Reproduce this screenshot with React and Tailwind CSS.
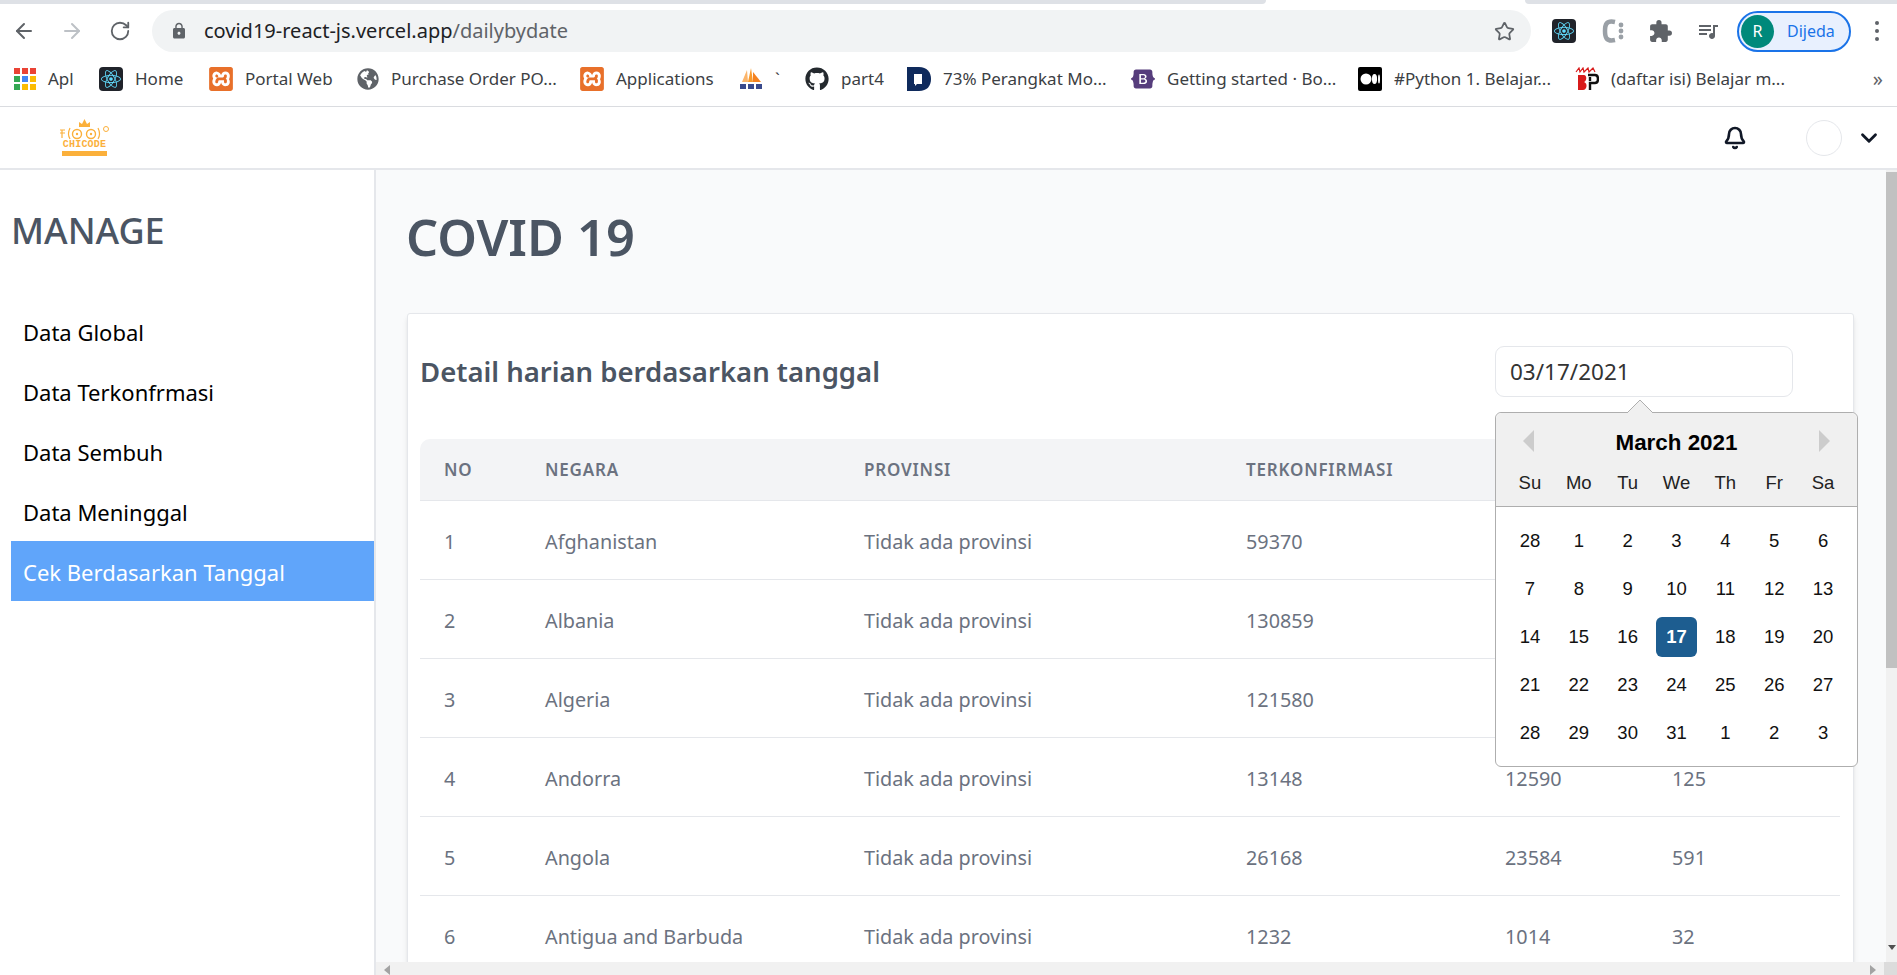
import { ArrowLeft, ArrowRight, Bell, ChevronDown, RotateCw, Star } from 'lucide-react';
import { FaGithub, FaGlobeAmericas, FaReact } from 'react-icons/fa';
import { MdExtension, MdLock, MdQueueMusic } from 'react-icons/md';
import { SiBootstrap, SiXampp } from 'react-icons/si';

const sans = 'font-["Noto_Sans","Open_Sans",sans-serif]';

const ReactIcon = () => (
  <span className="flex h-6 w-6 items-center justify-center rounded-sm bg-[#20232a]">
    <FaReact className="h-5 w-5 text-[#61dafb]" />
  </span>
);

const AppsIcon = () => {
  const dots = ['#ea4335', '#ea4335', '#ea4335', '#34a853', '#4285f4', '#fbbc04', '#34a853', '#fbbc04', '#fbbc04'];
  return (
    <span className="grid h-[22px] w-[22px] grid-cols-3 gap-[2px]">
      {dots.map((c, i) => (
        <span key={i} className="h-[6px] w-[6px]" style={{ background: c }} />
      ))}
    </span>
  );
};

const PmaIcon = () => (
  <svg viewBox="0 0 24 24" className="h-6 w-6">
    <path d="M3 15 L8 3 L9 15 Z" fill="#fbb56b" />
    <path d="M9 15 L12 1 L14 15 Z" fill="#f99a2c" />
    <path d="M14 15 L14 5 L22 15 Z" fill="#f58220" />
    <rect x="1" y="17" width="6" height="5" fill="#3a4a8c" />
    <rect x="9" y="17" width="6" height="5" fill="#3a4a8c" />
    <rect x="17" y="17" width="6" height="5" fill="#3a4a8c" />
  </svg>
);

const DetikIcon = () => (
  <svg viewBox="0 0 24 24" className="h-6 w-6">
    <path d="M0 0 H12 C20 0 24 5 24 12 C24 19 20 24 12 24 H0 Z" fill="#0f2a5c" />
    <path d="M7 7 H15 V17 H10 L8 19 V17 H7 Z" fill="#fff" />
  </svg>
);

const MediumIcon = () => (
  <svg viewBox="0 0 24 24" className="h-6 w-6">
    <rect width="24" height="24" rx="2" fill="#000" />
    <ellipse cx="8" cy="12" rx="5.5" ry="5.5" fill="#fff" />
    <ellipse cx="16.5" cy="12" rx="2.6" ry="5" fill="#fff" />
    <ellipse cx="21" cy="12" rx="1" ry="4.5" fill="#fff" />
  </svg>
);

const BpIcon = () => (
  <svg viewBox="0 0 24 24" className="h-6 w-6">
    <path d="M1 5 L4 1 L5 5 L8 1 L9 5 L13 1 L14 5 L18 1 L20 5" fill="none" stroke="#d81b1b" strokeWidth="1.2" />
    <path d="M3 8 H9 C12 8 12 14 9 15 C13 16 12 23 8 23 H3 Z" fill="#d81b1b" />
    <path d="M13 8 H20 C24 8 24 16 20 16 H15 V23 M15 10 V14" fill="none" stroke="#111" strokeWidth="2.4" />
  </svg>
);

const xampp = <SiXampp className="h-6 w-6 text-[#e8702a]" />;

const bookmarks = [
  { icon: <AppsIcon />, label: 'Apl', width: 'w-[26px]' },
  { icon: <ReactIcon />, label: 'Home', width: 'w-[49px]' },
  { icon: xampp, label: 'Portal Web', width: 'w-[87px]' },
  { icon: <FaGlobeAmericas className="h-[22px] w-[22px] text-[#5f6368]" />, label: 'Purchase Order PO...', width: 'w-[164px]' },
  { icon: xampp, label: 'Applications', width: 'w-[98px]' },
  { icon: <PmaIcon />, label: '`', width: 'w-[5px]' },
  { icon: <FaGithub className="h-6 w-6 text-[#24292e]" />, label: 'part4', width: 'w-[41px]' },
  { icon: <DetikIcon />, label: '73% Perangkat Mo...', width: 'w-[163px]' },
  { icon: <SiBootstrap className="h-6 w-6 text-[#563d7c]" />, label: 'Getting started · Bo...', width: 'w-[166px]' },
  { icon: <MediumIcon />, label: '#Python 1. Belajar...', width: 'w-[156px]' },
  { icon: <BpIcon />, label: '(daftar isi) Belajar m...', width: 'w-[170px]' },
];

const rows = [
  [1, 'Afghanistan', 59370],
  [2, 'Albania', 130859],
  [3, 'Algeria', 121580],
  [4, 'Andorra', 13148, 12590, 125],
  [5, 'Angola', 26168, 23584, 591],
  [6, 'Antigua and Barbuda', 1232, 1014, 32],
];

const menu = ['Data Global', 'Data Terkonfrmasi', 'Data Sembuh', 'Data Meninggal', 'Cek Berdasarkan Tanggal'];
const dayNames = ['Su', 'Mo', 'Tu', 'We', 'Th', 'Fr', 'Sa'];
const days = [
  28, 1, 2, 3, 4, 5, 6, 7, 8, 9, 10, 11, 12, 13, 14, 15, 16, 17, 18, 19, 20, 21, 22, 23, 24, 25, 26, 27, 28, 29, 30,
  31, 1, 2, 3,
];

const BrowserBar = () => (
  <div className={`${sans} h-[107px] border-b border-[#dadce0] bg-white`}>
    <div className="flex h-1 bg-white">
      <div className="w-[1266px] rounded-br-lg bg-[#dee1e6]" />
      <div className="w-[259px]" />
      <div className="flex-1 rounded-bl-lg bg-[#dee1e6]" />
    </div>
    <div className="mt-[3px] flex h-[48px] items-center">
      <ArrowLeft className="ml-[12px] h-6 w-6 text-[#5f6368]" />
      <ArrowRight className="ml-[24px] h-6 w-6 text-[#bdc1c6]" />
      <RotateCw className="ml-[25px] h-[22px] w-[22px] text-[#5f6368]" />
      <div className="ml-[21px] flex h-[42px] w-[1379px] items-center rounded-full bg-[#f1f3f4] pl-[18px] pr-[16px]">
        <MdLock className="h-[18px] w-[18px] text-[#5f6368]" />
        <span className="ml-[16px] text-[20px] text-[#202124]">
          covid19-react-js.vercel.app<span className="text-[#5f6368]">/dailybydate</span>
        </span>
        <Star className="ml-auto h-[21px] w-[21px] text-[#5f6368]" />
      </div>
      <div className="ml-[21px]">
        <ReactIcon />
      </div>
      <svg viewBox="0 0 22 26" className="ml-[26px] h-[26px] w-[22px]">
        <path d="M13 4 C4 2 3 7 3 13 C3 19 4 24 13 22" fill="none" stroke="#9aa0a6" strokeWidth="4.5" />
        <circle cx="19" cy="7" r="2.4" fill="#9aa0a6" />
        <circle cx="19" cy="13" r="2.4" fill="#9aa0a6" />
        <circle cx="19" cy="19" r="2.4" fill="#9aa0a6" />
      </svg>
      <MdExtension className="ml-[24px] h-[25px] w-[25px] text-[#5f6368]" />
      <MdQueueMusic className="ml-[23px] h-6 w-6 text-[#5f6368]" />
      <div className="ml-[17px] flex h-[41px] w-[114px] items-center rounded-full border-2 border-[#1a73e8] bg-[#e8f0fe] pl-[2px]">
        <span className="flex h-[33px] w-[33px] items-center justify-center rounded-full bg-[#00897b] text-[16px] text-white">
          R
        </span>
        <span className="ml-[13px] text-[16px] text-[#1a73e8]">Dijeda</span>
      </div>
      <span className="ml-[24px] flex flex-col gap-[4px]">
        <span className="h-[4px] w-[4px] rounded-full bg-[#5f6368]" />
        <span className="h-[4px] w-[4px] rounded-full bg-[#5f6368]" />
        <span className="h-[4px] w-[4px] rounded-full bg-[#5f6368]" />
      </span>
    </div>
    <div className="flex h-[51px] items-center pl-[14px] pb-[3px]">
      <div className="flex items-center gap-[25px]">
        {bookmarks.map((b, i) => (
          <div key={i} className="flex items-center gap-[12px]">
            {b.icon}
            <span className={`${b.width} whitespace-nowrap text-[17px] text-[#3c4043]`}>{b.label}</span>
          </div>
        ))}
      </div>
      <span className="ml-auto mr-[14px] text-[20px] leading-none text-[#5f6368]">»</span>
    </div>
  </div>
);

const TopNav = () => (
  <div className="flex h-[63px] items-center border-b-2 border-[#e5e7eb] bg-white">
    <div className="ml-[59px] flex w-[51px] flex-col items-center text-[#fbb03b]">
      <svg viewBox="0 0 51 21" className="h-[21px] w-[51px]">
        <path d="M20 8 L20 3 L23 5 L25.5 0 L28 5 L31 3 L31 8 Z" fill="currentColor" />
        <circle cx="18" cy="15" r="4.5" fill="none" stroke="currentColor" strokeWidth="1.4" />
        <circle cx="32" cy="15" r="4.5" fill="none" stroke="currentColor" strokeWidth="1.4" />
        <circle cx="18" cy="15" r="1.2" fill="currentColor" />
        <circle cx="32" cy="15" r="1.2" fill="currentColor" />
        <path d="M11 9 Q8 15 11 20 M39 9 Q42 15 39 20 M1 11 H6 M1 14 H6 M3 11 V19" fill="none" stroke="currentColor" strokeWidth="1.2" />
        <circle cx="47" cy="10" r="2.5" fill="none" stroke="currentColor" strokeWidth="1" />
      </svg>
      <span className="font-['Liberation_Mono',monospace] text-[10px] font-bold leading-[10px] tracking-[0.2px]">CHICODE</span>
      <span className="mt-[1px] h-[5px] w-[45px] bg-[#fbb03b]" />
    </div>
    <Bell className="ml-auto h-[24px] w-[24px] text-[#111827]" strokeWidth={2.6} />
    <span className="ml-[59px] h-[36px] w-[36px] rounded-full border border-[#e5e7eb]" />
    <ChevronDown className="ml-[14px] mr-[15px] h-[26px] w-[26px] text-[#111827]" strokeWidth={2.6} />
  </div>
);

const Sidebar = () => (
  <aside className={`${sans} w-[376px] shrink-0 border-r-2 border-[#e5e7eb] bg-white pl-[11px] pt-[41px]`}>
    <h2 className="text-[36px] font-medium leading-[40px] text-[#4b5563]">MANAGE</h2>
    <ul className="mt-[50px]">
      {menu.map((m, i) => (
        <li
          key={m}
          className={`flex h-[60px] items-center px-[12px] pt-[2px] text-[22px] ${
            i === 4 ? 'bg-[#60a5fa] text-white' : 'text-black'
          }`}
        >
          {m}
        </li>
      ))}
    </ul>
  </aside>
);

const Calendar = () => (
  <div className="absolute left-0 top-[66px] w-[363px] rounded-[6px] border border-[#aeaeae] bg-white font-['Liberation_Sans',sans-serif]">
    <svg viewBox="0 0 26 13" className="absolute left-[131px] top-[-13px] h-[13px] w-[26px]">
      <path d="M0 13 L13 0 L26 13" fill="#f0f0f0" stroke="#aeaeae" strokeWidth="1" />
    </svg>
    <div className="h-[94px] rounded-t-[6px] border-b border-[#aeaeae] bg-[#f0f0f0]">
      <div className="flex h-[58px] items-center justify-between px-[27px] pt-[2px]">
        <span className="-mt-[5px] h-0 w-0 border-y-[11px] border-r-[11px] border-y-transparent border-r-[#ccc]" />
        <span className="text-[22.4px] font-bold text-black">March 2021</span>
        <span className="-mt-[5px] h-0 w-0 border-y-[11px] border-l-[11px] border-y-transparent border-l-[#ccc]" />
      </div>
      <div className="mx-auto grid w-[342px] grid-cols-7">
        {dayNames.map((d) => (
          <span key={d} className="text-center text-[18.5px] leading-[24px] text-[#222]">
            {d}
          </span>
        ))}
      </div>
    </div>
    <div className="mx-auto grid w-[342px] grid-cols-7 pb-[9px] pt-[10px]">
      {days.map((d, i) => (
        <span key={i} className="flex h-[48px] items-center justify-center text-[18.5px] text-[#111]">
          {i === 17 ? (
            <span className="flex h-[40px] w-[41px] items-center justify-center rounded-[6px] bg-[#1d5d90] font-bold text-white">
              {d}
            </span>
          ) : (
            d
          )}
        </span>
      ))}
    </div>
  </div>
);

const Card = () => (
  <section className="w-[1447px] rounded-[3px] border border-[#e5e7eb] bg-white px-[12px] pt-[32px] shadow-md">
    <div className="flex h-[51px] items-center justify-between">
      <h3 className="text-[27.5px] font-semibold text-[#4b5563]">Detail harian berdasarkan tanggal</h3>
      <div className="relative mr-[48px] w-[298px]">
        <div className="flex h-[51px] items-center rounded-[9px] border border-[#e5e7eb] bg-white pl-[14px] text-[22.5px] text-[#333]">
          03/17/2021
        </div>
        <Calendar />
      </div>
    </div>
    <table className="mt-[42px] w-[1420px] table-fixed border-collapse">
      <thead>
        <tr className="h-[61px] border-b border-[#e5e7eb] bg-[#f3f4f6] text-left text-[17px] tracking-[0.8px] text-[#6b7280]">
          <th className="w-[101px] rounded-tl-[10px] pl-[24px] font-semibold">NO</th>
          <th className="w-[319px] pl-[24px] font-semibold">NEGARA</th>
          <th className="w-[382px] pl-[24px] font-semibold">PROVINSI</th>
          <th className="w-[259px] pl-[24px] font-semibold">TERKONFIRMASI</th>
          <th className="w-[167px]" />
          <th className="rounded-tr-[10px]" />
        </tr>
      </thead>
      <tbody>
        {rows.map(([no, country, confirmed, recovered, deaths]) => (
          <tr key={no} className="h-[79px] border-b border-[#e5e7eb] text-[19.8px] text-[#6b7280]">
            <td className="pl-[24px] pt-[4px]">{no}</td>
            <td className="pl-[24px] pt-[4px]">{country}</td>
            <td className="pl-[24px] pt-[4px]">Tidak ada provinsi</td>
            <td className="pl-[24px] pt-[4px]">{confirmed}</td>
            <td className="pl-[24px] pt-[4px]">{recovered}</td>
            <td className="pl-[24px] pt-[4px]">{deaths}</td>
          </tr>
        ))}
      </tbody>
    </table>
  </section>
);

export default function App() {
  return (
    <div className="flex h-[975px] w-[1897px] flex-col overflow-hidden bg-white">
      <BrowserBar />
      <TopNav />
      <div className="flex min-h-0 flex-1">
        <Sidebar />
        <div className="flex min-w-0 flex-1 flex-col">
          <div className="flex min-h-0 flex-1">
            <main className={`${sans} min-w-0 flex-1 overflow-hidden bg-[#f9fafb] pl-[30px] pt-[37px]`}>
              <h1 className="text-[50.5px] font-semibold leading-[60px] text-[#4b5563]">COVID 19</h1>
              <div className="ml-[1px] mt-[46px]">
                <Card />
              </div>
            </main>
            <div className="flex w-[11px] flex-col justify-between bg-[#f1f1f1] pt-[2px]">
              <div className="h-[496px] bg-[#c1c1c1]" />
              <span className="mb-[12px] ml-[2px] h-0 w-0 border-x-[4px] border-t-[5px] border-x-transparent border-t-[#505050]" />
            </div>
          </div>
          <div className="flex h-[13px] items-end justify-between bg-[#f1f1f1] pl-[8px]">
            <span className="h-0 w-0 border-y-[5px] border-r-[6px] border-y-transparent border-r-[#a3a3a3]" />
            <div className="flex items-end">
              <span className="mr-[8px] h-0 w-0 border-y-[5px] border-l-[6px] border-y-transparent border-l-[#a3a3a3]" />
              <span className="h-[13px] w-[13px] bg-[#dcdcdc]" />
            </div>
          </div>
        </div>
      </div>
    </div>
  );
}
